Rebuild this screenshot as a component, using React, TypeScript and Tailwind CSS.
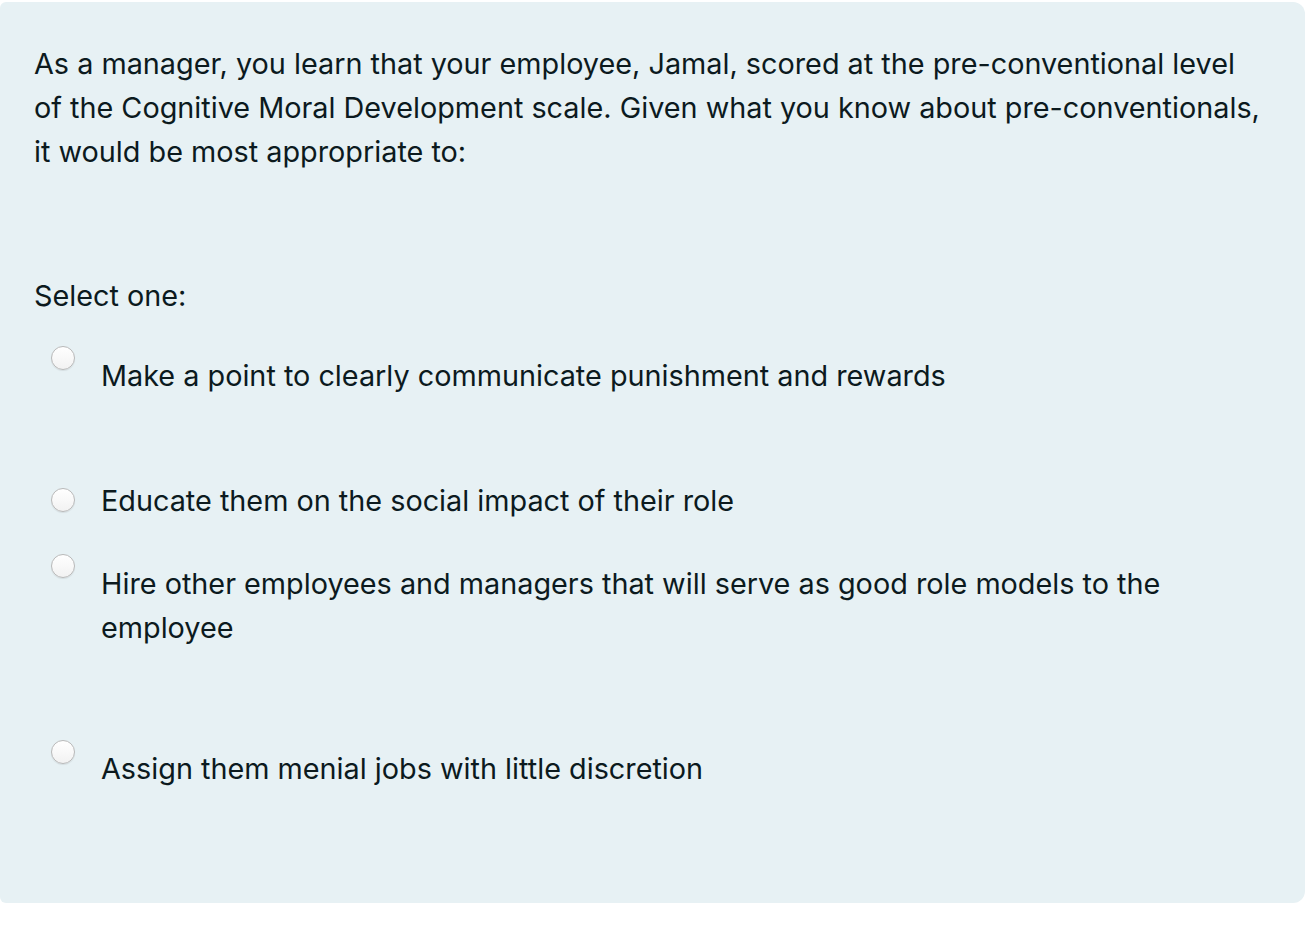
import React from "react";

const options = [
  { label: "Make a point to clearly communicate punishment and rewards", radioTop: "mt-0", textTop: "mt-[8px]", rowTop: "mt-[28px]" },
  { label: "Educate them on the social impact of their role", radioTop: "mt-[9px]", textTop: "mt-0", rowTop: "mt-[81px]" },
  { label: "Hire other employees and managers that will serve as good role models to the employee", radioTop: "mt-0", textTop: "mt-[8px]", rowTop: "mt-[31px]" },
  { label: "Assign them menial jobs with little discretion", radioTop: "mt-0", textTop: "mt-[7px]", rowTop: "mt-[90px]" },
];

function Radio() {
  return (
    <span className="block h-[24px] w-[24px] shrink-0 rounded-full border border-[#b9b9b9] bg-gradient-to-b from-white to-[#f2f2f2] shadow-[0_1px_1px_rgba(0,0,0,0.08)]" />
  );
}

export default function App() {
  return (
    <div className="min-h-[943px] bg-white pt-[2px] font-['Inter',sans-serif] text-[#0c1a1e]">
      <div className="w-[1305px] rounded-r-[12px] rounded-l-[6px] bg-[#e7f1f4] pb-[112px] pl-[34px] pr-[40px] pt-[40px] text-[28.8px] leading-[44px]">
        <p>
          As a manager, you learn that your employee, Jamal, scored at the pre-conventional level of the Cognitive Moral Development scale. Given what you know about pre-conventionals, it would be most appropriate to:
        </p>
        <p className="mt-[100px]">Select one:</p>
        <div>
          {options.map((option) => (
            <div key={option.label} className={`flex items-start pl-[17px] ${option.rowTop}`}>
              <div className={option.radioTop}>
                <Radio />
              </div>
              <div className={`ml-[26px] ${option.textTop}`}>{option.label}</div>
            </div>
          ))}
        </div>
      </div>
    </div>
  );
}
